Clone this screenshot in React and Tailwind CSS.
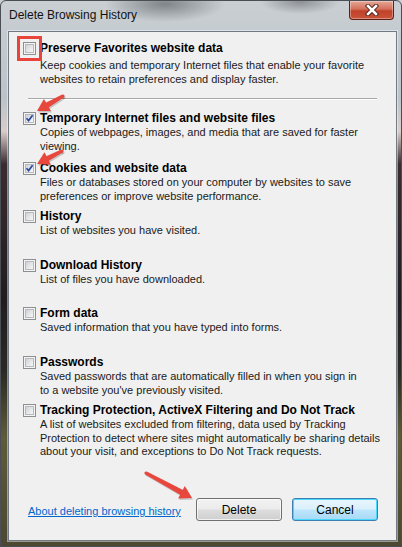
import React from "react";

const items = [
  {
    title: "Temporary Internet files and website files",
    desc: ["Copies of webpages, images, and media that are saved for faster", "viewing."],
    checked: true,
    h: "h-[50px]",
  },
  {
    title: "Cookies and website data",
    desc: ["Files or databases stored on your computer by websites to save", "preferences or improve website performance."],
    checked: true,
    h: "h-[48px]",
  },
  { title: "History", desc: ["List of websites you have visited."], h: "h-[49px]" },
  { title: "Download History", desc: ["List of files you have downloaded."], h: "h-[48px]" },
  { title: "Form data", desc: ["Saved information that you have typed into forms."], h: "h-[49px]" },
  {
    title: "Passwords",
    desc: ["Saved passwords that are automatically filled in when you sign in", "to a website you've previously visited."],
    h: "h-[48px]",
  },
  {
    title: "Tracking Protection, ActiveX Filtering and Do Not Track",
    desc: [
      "A list of websites excluded from filtering, data used by Tracking",
      "Protection to detect where sites might automatically be sharing details",
      "about your visit, and exceptions to Do Not Track requests.",
    ],
    h: "h-[95px]",
  },
];

function Checkbox({ checked }) {
  return (
    <div className="w-[13px] h-[13px] shrink-0 border border-[#8e8f8f] bg-[#f4f4f4] p-[1px]">
      <div className="relative w-full h-full border border-[#b6b9bd] bg-[linear-gradient(135deg,#cfd2d6_0%,#e6e7e9_55%,#f7f7f7_100%)]">
        {checked && (
          <svg className="absolute -left-[1px] -top-[1px]" width="9" height="9" viewBox="0 0 9 9">
            <path d="M1.5 4.2 L3.6 6.6 L7.6 1.2" fill="none" stroke="#2a4a9e" strokeWidth="1.7" />
          </svg>
        )}
      </div>
    </div>
  );
}

function Arrow({ x1, y1, x2, y2 }) {
  const dx = x2 - x1;
  const dy = y2 - y1;
  const L = Math.hypot(dx, dy);
  const ux = dx / L;
  const uy = dy / L;
  const px = -uy;
  const py = ux;
  const hl = 12;
  const hw = 7;
  const bx = x2 - ux * hl;
  const by = y2 - uy * hl;
  const head = [
    [x2, y2],
    [bx + px * hw, by + py * hw],
    [bx - px * hw, by - py * hw],
  ];
  const shaft = [
    [x1 + px * 1.6, y1 + py * 1.6],
    [bx + ux * 2 + px * 2.8, by + uy * 2 + py * 2.8],
    [bx + ux * 2 - px * 2.8, by + uy * 2 - py * 2.8],
    [x1 - px * 1.6, y1 - py * 1.6],
  ];
  const pts = (a) => a.map((p) => p.join(",")).join(" ");
  return (
    <g>
      <g transform="translate(1,1.5)" fill="rgba(0,0,0,0.18)">
        <polygon points={pts(shaft)} />
        <polygon points={pts(head)} />
        <circle cx={x1} cy={y1} r="1.6" />
      </g>
      <g fill="#e8473d">
        <polygon points={pts(shaft)} />
        <polygon points={pts(head)} />
        <circle cx={x1} cy={y1} r="1.6" />
      </g>
    </g>
  );
}

export default function App() {
  return (
    <div className="relative w-[402px] h-[547px] overflow-hidden font-['Liberation_Sans',Arial,sans-serif] text-black bg-[radial-gradient(ellipse_60px_18px_at_165px_4px,#7f8488_0%,rgba(127,132,136,0)_100%),radial-gradient(ellipse_40px_12px_at_300px_2px,#8d9194_0%,rgba(141,145,148,0)_100%),linear-gradient(180deg,#c9cfd3_0%,#bcc3c8_18%,#d9cdc9_24%,#3b2c2f_30%,#221c1f_55%,#2a2a24_68%,#5f5b39_80%,#4b4731_100%)]">
      <div className="absolute inset-0 rounded-t-[6px] border border-[#4a4f55] pointer-events-none" />

      {/* title bar */}
      <div className="flex h-[31px] items-start">
        <div className="pl-[9px] pt-[8px] text-[12px] leading-[14px] text-[#111]">Delete Browsing History</div>
        <div className="ml-auto mr-[8px] mt-[1px] w-[45px] h-[19px] rounded-b-[4px] border border-t-0 border-[#5e1f14] bg-[linear-gradient(180deg,#e4a797_0%,#d4705a_45%,#c0412a_55%,#c9543a_100%)] flex items-center justify-center shadow-[inset_0_0_0_1px_rgba(255,255,255,0.35)]">
          <svg width="14" height="12" viewBox="0 0 14 12">
            <path d="M3 2 L11 10 M11 2 L3 10" stroke="#4a1a12" strokeWidth="4.4" strokeLinecap="square" />
            <path d="M3 2 L11 10 M11 2 L3 10" stroke="#ffffff" strokeWidth="2.6" strokeLinecap="square" />
          </svg>
        </div>
      </div>

      {/* client area */}
      <div className="ml-[8px] w-[389px] h-[510px] border border-[#6f7a84] bg-[#f0f0f0] shadow-[0_0_0_1px_rgba(255,255,255,0.45)] flex flex-col text-[11px]">
        <div className="pt-[9px] pl-[14px]">
          <div className="flex items-start">
            <div className="relative mt-[1px]">
              <Checkbox />
              <div className="absolute -left-[6px] -top-[6px] w-[25px] h-[25px] border-[3px] border-[#e8443c]" />
            </div>
            <div className="ml-[4px]">
              <div className="font-bold text-[12px] leading-[14px] whitespace-nowrap">Preserve Favorites website data</div>
              <div className="mt-[3px] leading-[14px] whitespace-nowrap text-[#1a1a1a]">
                <div>Keep cookies and temporary Internet files that enable your favorite</div>
                <div>websites to retain preferences and display faster.</div>
              </div>
            </div>
          </div>
        </div>

        <div className="mt-[12px] ml-[19px] w-[349px] h-[2px] border-t border-[#a9a9a9] bg-white" />

        <div className="mt-[11px] pl-[14px]">
          {items.map((it) => (
            <div key={it.title} className={`flex items-start ${it.h}`}>
              <div className="mt-[1px]">
                <Checkbox checked={it.checked} />
              </div>
              <div className="ml-[4px]">
                <div className="font-bold text-[12px] leading-[14px] whitespace-nowrap">{it.title}</div>
                <div className="mt-[1px] leading-[13.5px] whitespace-nowrap text-[#1a1a1a]">
                  {it.desc.map((d) => (
                    <div key={d}>{d}</div>
                  ))}
                </div>
              </div>
            </div>
          ))}
        </div>

        <div className="flex items-center h-[23px] mr-[18px]">
          <a className="ml-[19px] mt-[3px] text-[11px] leading-[14px] text-[#0066cc] underline whitespace-nowrap">
            About deleting browsing history
          </a>
          <div className="flex-1" />
          <button className="w-[86px] h-[23px] rounded-[3px] border border-[#707070] text-[12px] bg-[linear-gradient(180deg,#f2f2f2_0%,#ebebeb_48%,#dddddd_52%,#cfcfcf_100%)] shadow-[inset_0_0_0_1px_rgba(255,255,255,0.7)]">
            Delete
          </button>
          <button className="ml-[10px] w-[86px] h-[23px] rounded-[3px] border border-[#3c7fb1] text-[12px] bg-[linear-gradient(180deg,#eaf6fd_0%,#d9f0fc_48%,#bee6fd_52%,#a7d9f5_100%)] shadow-[inset_0_0_0_1px_#48d8fb]">
            Cancel
          </button>
        </div>
      </div>

      {/* annotation arrows */}
      <svg className="absolute inset-0 pointer-events-none" width="402" height="547" viewBox="0 0 402 547">
        <Arrow x1={63} y1={96} x2={37} y2={111} />
        <Arrow x1={62} y1={151} x2={37} y2={164} />
        <Arrow x1={146} y1={473} x2={192} y2={498} />
      </svg>
    </div>
  );
}
